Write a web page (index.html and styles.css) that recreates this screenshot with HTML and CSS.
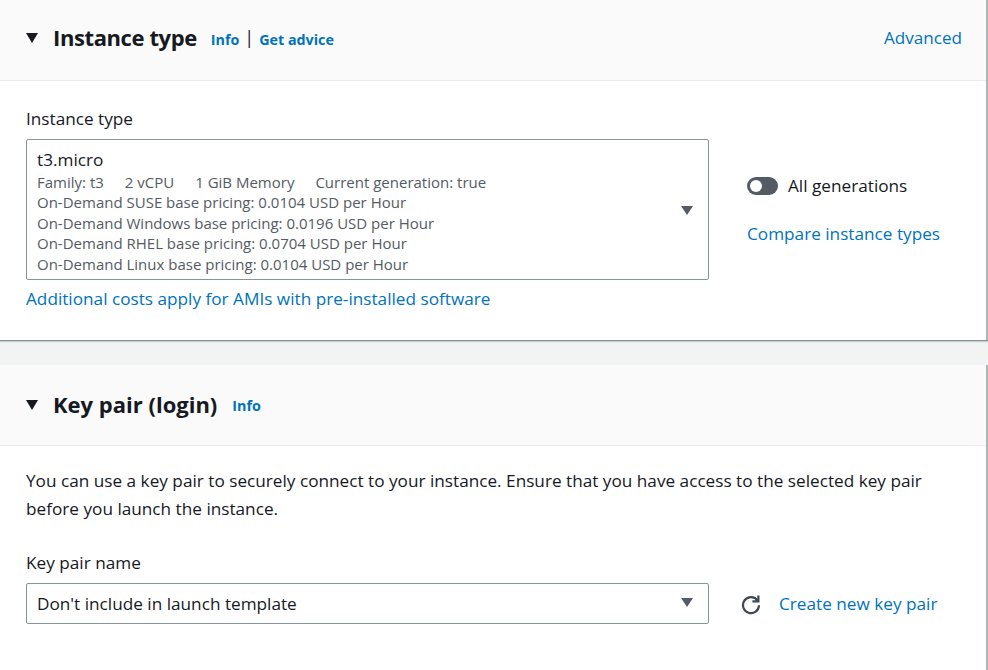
FILE: index.html
```html
<!DOCTYPE html>
<html lang="en">
<head>
<meta charset="utf-8">
<title>Instance type</title>
<link rel="stylesheet" href="styles.css">
</head>
<body>
<section class="panel panel-first">
  <header class="panel-header">
    <div class="title-group">
      <span class="caret"></span>
      <h2 class="title">Instance type</h2>
      <a class="info">Info</a>
      <span class="pipe">|</span>
      <a class="info">Get advice</a>
    </div>
    <a class="advanced">Advanced</a>
  </header>
  <div class="panel-body">
    <div class="label">Instance type</div>
    <div class="row">
      <div class="select select-tall">
        <div class="select-text">
          <div class="select-main">t3.micro</div>
          <div class="meta">
            <span>Family: t3</span><span>2 vCPU</span><span>1 GiB Memory</span><span>Current generation: true</span>
          </div>
          <div class="sub">On-Demand SUSE base pricing: 0.0104 USD per Hour</div>
          <div class="sub">On-Demand Windows base pricing: 0.0196 USD per Hour</div>
          <div class="sub">On-Demand RHEL base pricing: 0.0704 USD per Hour</div>
          <div class="sub">On-Demand Linux base pricing: 0.0104 USD per Hour</div>
        </div>
        <span class="arrow"></span>
      </div>
      <div class="side">
        <div class="toggle-row">
          <span class="toggle"><span class="knob"></span></span>
          <span>All generations</span>
        </div>
        <a class="link">Compare instance types</a>
      </div>
    </div>
    <a class="link costs">Additional costs apply for AMIs with pre-installed software</a>
  </div>
</section>
<section class="panel panel-second">
  <header class="panel-header">
    <div class="title-group">
      <span class="caret"></span>
      <h2 class="title title-wide">Key pair (login)</h2>
      <a class="info">Info</a>
    </div>
  </header>
  <div class="panel-body body-two">
    <p class="desc">You can use a key pair to securely connect to your instance. Ensure that you have access to the selected key pair before you launch the instance.</p>
    <div class="label">Key pair name</div>
    <div class="row row-center">
      <div class="select select-short">
        <span class="select-single">Don't include in launch template</span>
        <span class="arrow"></span>
      </div>
      <div class="side-inline">
        <svg class="refresh" width="22" height="22" viewBox="0 0 22 22" aria-hidden="true">
          <path d="M17.6 7.6 A8 8 0 1 0 19 12.2" fill="none" stroke="#414750" stroke-width="2.2"/>
          <path d="M18.4 2.4 V8.4 H12.4" fill="none" stroke="#414750" stroke-width="2.2"/>
        </svg>
        <a class="link">Create new key pair</a>
      </div>
    </div>
  </div>
</section>
</body>
</html>
```
FILE: styles.css
```css
* { box-sizing: border-box; }
html, body { margin: 0; padding: 0; }
body {
  background: #f2f3f3;
  font-family: "Open Sans", "Noto Sans", sans-serif;
  color: #16191f;
  width: 988px;
  height: 670px;
  overflow: hidden;
}
a { color: #0073bb; text-decoration: none; }
.panel {
  background: #fff;
  border-right: 2px solid #aab7b8;
}
.panel-first {
  box-shadow: 0 1px 0 0 #879596, 0 2px 1px 0 #c8cfd0;
  margin-bottom: 25px;
}
.panel-header {
  height: 81px;
  background: #fafafa;
  border-bottom: 1px solid #eaeded;
  display: flex;
  align-items: center;
  justify-content: space-between;
  padding: 0 24px 6px 26px;
}
.panel-second .panel-header { padding-bottom: 3px; }
.title-group {
  display: flex;
  align-items: center;
}
.caret {
  width: 0; height: 0;
  border-left: 6px solid transparent;
  border-right: 6px solid transparent;
  border-top: 10px solid #16191f;
  margin-right: 15px;
  margin-top: 2px;
}
.title {
  margin: 0;
  font-size: 22px;
  font-weight: 700;
  letter-spacing: -0.4px;
  margin-right: 14px;
}
.title-wide {
  letter-spacing: 0;
  margin-right: 15px;
}
.info {
  font-size: 14.3px;
  font-weight: 700;
  margin-top: 4px;
}
.pipe {
  font-size: 18px;
  margin: 0 5px;
  color: #16191f;
}
.advanced {
  font-size: 17.1px;
}
.panel-body {
  padding: 26px 26px 30px 26px;
}
.label {
  font-size: 17.2px;
  line-height: 24px;
  margin-bottom: 8px;
}
.row {
  display: flex;
  align-items: flex-start;
}
.row-center { align-items: center; }
.select {
  width: 683px;
  border: 1px solid #879596;
  border-radius: 2px;
  display: flex;
  align-items: center;
  justify-content: space-between;
  padding: 0 15px 0 10px;
  flex-shrink: 0;
}
.select-tall {
  height: 141px;
  padding-top: 3px;
}
.select-main {
  font-size: 17.2px;
  line-height: 24px;
}
.meta, .sub {
  font-size: 15px;
  line-height: 20.5px;
  color: #545b64;
}
.meta span { margin-right: 21px; }
.arrow {
  width: 0; height: 0;
  border-left: 6.5px solid transparent;
  border-right: 6.5px solid transparent;
  border-top: 9px solid #545b64;
  margin-top: -2px;
}
.side {
  margin-left: 38px;
  padding-top: 35px;
  display: flex;
  flex-direction: column;
  gap: 25px;
}
.toggle-row {
  display: flex;
  align-items: center;
  gap: 10px;
  font-size: 17.2px;
}
.toggle {
  width: 31px;
  height: 18px;
  border-radius: 9px;
  background: #545b64;
  position: relative;
  display: inline-block;
}
.knob {
  position: absolute;
  left: 3px; top: 3px;
  width: 12px; height: 12px;
  border-radius: 50%;
  background: #fff;
}
.link { font-size: 17.2px; }
.costs {
  display: block;
  margin-top: 7px;
}
.body-two { padding-top: 21px; padding-bottom: 60px; }
.desc {
  margin: 0 0 28px 0;
  font-size: 17.2px;
  line-height: 28px;
  max-width: 940px;
}
.select-short { height: 41px; }
.select-single { font-size: 17.2px; }
.side-inline {
  margin-left: 31px;
  display: flex;
  align-items: center;
  gap: 17px;
}
.refresh { display: block; }
```
